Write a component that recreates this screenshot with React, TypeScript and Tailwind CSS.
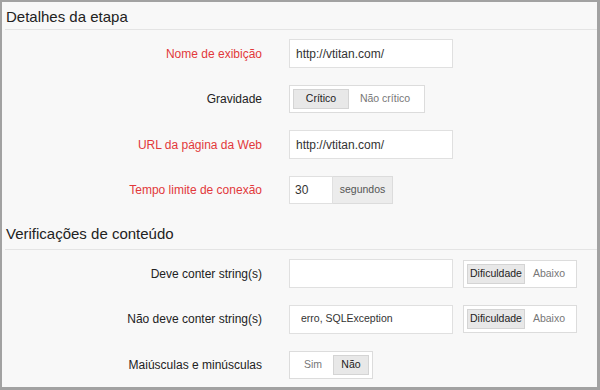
import React from "react";

const font = { fontFamily: '"Liberation Sans", Arial, sans-serif' };

function Row({ label, red, children }: { label: string; red?: boolean; children: React.ReactNode }) {
  return (
    <div className="flex items-center h-[29px]">
      <div className={`w-[260px] text-right text-[12px] leading-[14px] ${red ? "text-[#e2383b]" : "text-[#222]"}`}>{label}</div>
      <div className="ml-[27px] flex items-center h-full">{children}</div>
    </div>
  );
}

function Input({ value, pl = "pl-[6px]", small }: { value?: string; pl?: string; small?: boolean }) {
  return (
    <div className={`w-[164px] h-[29px] bg-white border border-[#e0e0e0] flex items-center ${pl} ${small ? "text-[10.5px]" : "text-[12px]"} text-[#333]`}>
      {value}
    </div>
  );
}

function Seg({ items, active, widths, h = "h-[28px]" }: { items: string[]; active: number; widths: string[]; h?: string }) {
  return (
    <div className={`${h} bg-white border border-[#dcdcdc] flex items-center p-[3px]`}>
      {items.map((it, i) => (
        <div
          key={it}
          className={`${widths[i]} h-[20px] flex items-center justify-center text-[10.5px] ${
            i === active ? "bg-[#e8e8e8] border border-[#d4d4d4] text-[#222]" : "text-[#777]"
          }`}
        >
          {it}
        </div>
      ))}
    </div>
  );
}

export default function App() {
  return (
    <div
      style={font}
      className="w-[600px] h-[390px] bg-[#f8f8f8] border-l-2 border-t-2 border-r-[3px] border-b-[3px] border-[#a2a2a2] overflow-hidden"
    >
      <div className="ml-[3px] pt-[6px] pb-[3px] border-b border-[#e4e4e4]">
        <div className="pl-[1px] text-[15px] leading-[18px] text-[#222]">Detalhes da etapa</div>
      </div>
      <div className="pt-[9px] flex flex-col gap-[16.5px]">
        <Row label="Nome de exibição" red>
          <Input value="http://vtitan.com/" />
        </Row>
        <Row label="Gravidade">
          <Seg items={["Crítico", "Não crítico"]} active={0} widths={["w-[56px]", "w-[72px]"]} />
        </Row>
        <Row label="URL da página da Web" red>
          <Input value="http://vtitan.com/" />
        </Row>
        <Row label="Tempo limite de conexão" red>
          <div className="flex h-[28px]">
            <div className="w-[44px] bg-white border border-[#e0e0e0] flex items-center pl-[5px] text-[12px] text-[#333]">30</div>
            <div className="w-[60px] bg-[#ececec] border border-l-0 border-[#dcdcdc] flex items-center justify-center text-[10.5px] text-[#555]">segundos</div>
          </div>
        </Row>
      </div>
      <div className="mt-[20.5px] ml-[3px] pb-[6px] border-b border-[#e4e4e4]">
        <div className="pl-[1px] text-[15px] leading-[18px] text-[#222]">Verificações de conteúdo</div>
      </div>
      <div className="pt-[9px] flex flex-col gap-[16.5px]">
        <Row label="Deve conter string(s)">
          <Input />
          <div className="ml-[10px]">
            <Seg items={["Dificuldade", "Abaixo"]} active={0} widths={["w-[58px]", "w-[48px]"]} />
          </div>
        </Row>
        <Row label="Não deve conter string(s)">
          <Input value="erro, SQLException" pl="pl-[11px]" small />
          <div className="ml-[10px]">
            <Seg items={["Dificuldade", "Abaixo"]} active={0} widths={["w-[58px]", "w-[48px]"]} />
          </div>
        </Row>
        <Row label="Maiúsculas e minúsculas">
          <Seg items={["Sim", "Não"]} active={1} widths={["w-[40px]", "w-[36px]"]} />
        </Row>
      </div>
    </div>
  );
}
